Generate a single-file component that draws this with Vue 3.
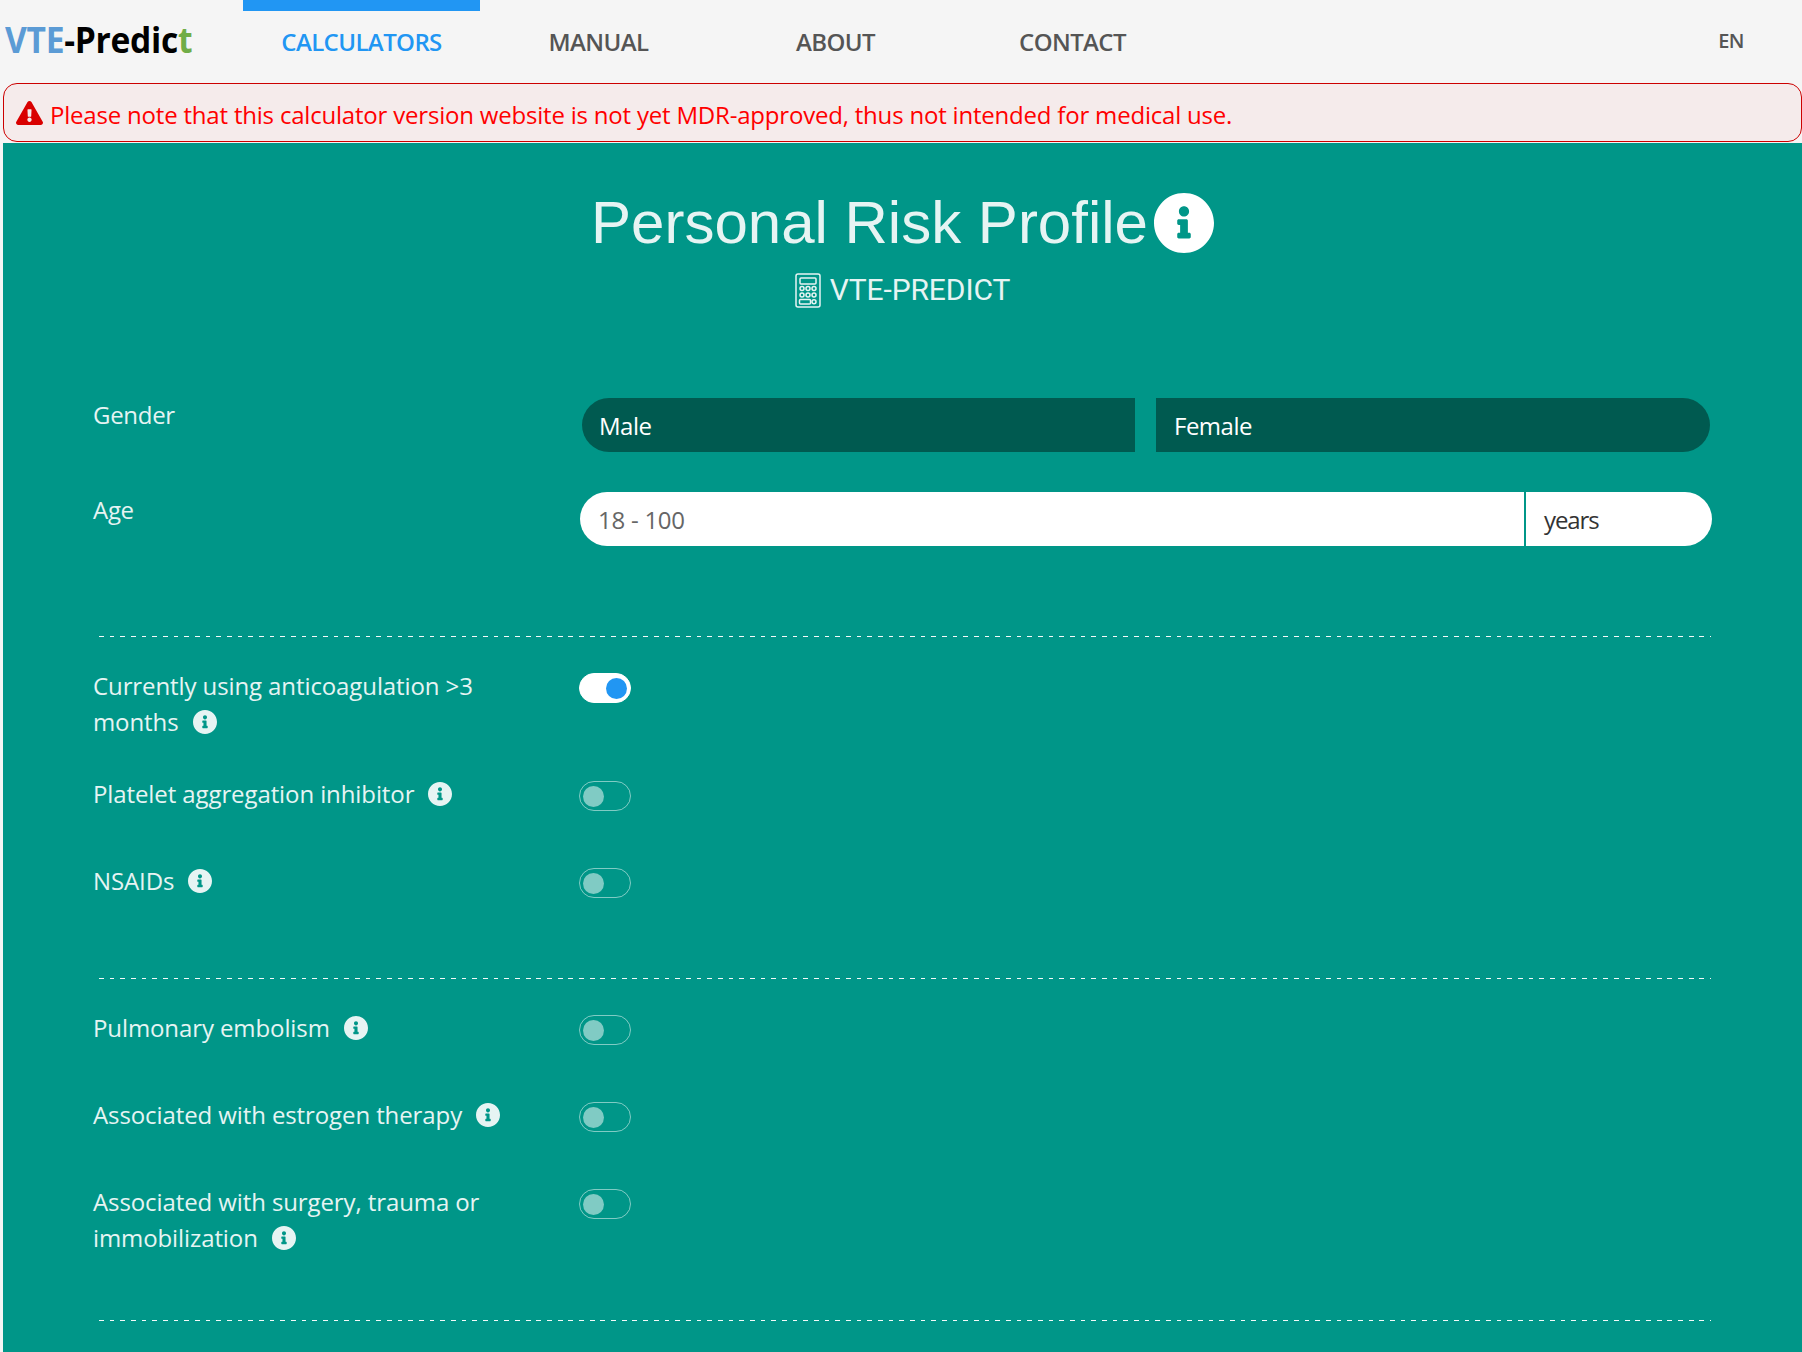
<script setup>
const nav = ['CALCULATORS', 'MANUAL', 'ABOUT', 'CONTACT']
const infoPath = 'M256 8C119.043 8 8 119.083 8 256c0 136.997 111.043 248 248 248s248-111.003 248-248C504 119.083 392.957 8 256 8zm0 110c23.196 0 42 18.804 42 42s-18.804 42-42 42-42-18.804-42-42 18.804-42 42-42zm56 254c0 6.627-5.373 12-12 12h-88c-6.627 0-12-5.373-12-12v-24c0-6.627 5.373-12 12-12h12v-64h-12c-6.627 0-12-5.373-12-12v-24c0-6.627 5.373-12 12-12h64c6.627 0 12 5.373 12 12v100h12c6.627 0 12 5.373 12 12v24z'
const sections = [
  [
    { label: 'Currently using anticoagulation >3 months', on: true },
    { label: 'Platelet aggregation inhibitor', on: false },
    { label: 'NSAIDs', on: false }
  ],
  [
    { label: 'Pulmonary embolism', on: false },
    { label: 'Associated with estrogen therapy', on: false },
    { label: 'Associated with surgery, trauma or immobilization', on: false }
  ]
]
</script>

<template>
  <div class="page">
    <header class="topbar">
      <div class="logo"><span class="logo-text"><span class="lb">VTE</span>-Predic<span class="lg">t</span></span></div>
      <nav class="nav">
        <a v-for="(item, i) in nav" :key="item" class="nav-item" :class="{ active: i === 0 }">{{ item }}</a>
      </nav>
      <div class="lang">EN</div>
    </header>

    <div class="alert">
      <svg class="warn" viewBox="0 0 576 512"><path fill="#d90000" d="M569.517 440.013C587.975 472.007 564.806 512 527.94 512H48.054c-36.937 0-59.999-40.055-41.577-71.987L246.423 23.985c18.467-32.009 64.72-31.951 83.154 0l239.94 416.028zM288 354c-25.405 0-46 20.595-46 46s20.595 46 46 46 46-20.595 46-46-20.595-46-46-46zm-43.673-165.346l7.418 136c.347 6.364 5.609 11.346 11.982 11.346h48.546c6.373 0 11.635-4.982 11.982-11.346l7.418-136c.375-6.874-5.098-12.654-11.982-12.654h-63.383c-6.884 0-12.356 5.78-11.981 12.654z"/></svg>
      <span class="alert-text">Please note that this calculator version website is not yet MDR-approved, thus not intended for medical use.</span>
    </div>

    <main class="panel">
      <div class="heading">
        <h1 class="title">Personal Risk Profile<svg class="title-info" viewBox="8 8 496 496"><path fill="#fff" :d="infoPath"/></svg></h1>
        <div class="subtitle">
          <svg class="calc" viewBox="0 0 26 35" fill="none" stroke="#e6f4f3" stroke-width="1.5">
            <rect x="1" y="1" width="24" height="33" rx="2"/>
            <rect x="5" y="5" width="16" height="6" rx="1"/>
            <circle cx="7" cy="15.5" r="2"/><circle cx="13" cy="15.5" r="2"/><circle cx="19" cy="15.5" r="2"/>
            <circle cx="7" cy="22" r="2"/><circle cx="13" cy="22" r="2"/><circle cx="19" cy="22" r="2"/>
            <rect x="4.5" y="26.5" width="11" height="4.5" rx="1"/><circle cx="19" cy="28.7" r="2"/>
          </svg>
          <span>VTE-PREDICT</span>
        </div>
      </div>

      <section class="basics">
        <div class="basic-row">
          <div class="basic-label">Gender</div>
          <div class="gender">
            <div class="seg seg-l">Male</div>
            <div class="seg seg-r">Female</div>
          </div>
        </div>
        <div class="basic-row">
          <div class="basic-label">Age</div>
          <div class="age">
            <div class="age-input">18 - 100</div>
            <div class="age-unit">years</div>
          </div>
        </div>
      </section>

      <template v-for="(rows, s) in sections" :key="s">
        <hr class="dash" />
        <section class="toggles">
          <div v-for="row in rows" :key="row.label" class="row">
            <div class="row-label">{{ row.label }}<svg class="info" viewBox="8 8 496 496"><path fill="#e6f4f3" :d="infoPath"/></svg></div>
            <div class="toggle" :class="{ on: row.on }"><span class="knob"></span></div>
          </div>
        </section>
      </template>
      <hr class="dash" />
    </main>
  </div>
</template>

<style>
html, body { margin: 0; background: #f5f5f5; overflow: hidden; }
</style>

<style scoped>
.page {
  width: 1802px;
  height: 1352px;
  overflow: hidden;
  background: #f5f5f5;
  font-family: "Open Sans", "Noto Sans", sans-serif;
}
.topbar {
  height: 83px;
  display: flex;
  position: relative;
}
.logo {
  width: 243px;
  padding: 20px 0 0 5px;
  box-sizing: border-box;
}
.logo-text {
  display: inline-block;
  font-size: 35px;
  line-height: 40px;
  font-weight: 700;
  color: #000;
  transform: scaleX(0.96);
  transform-origin: left center;
  letter-spacing: -0.3px;
  white-space: nowrap;
}
.lb { color: #5b9bd5; }
.lg { color: #70ad47; }
.nav { display: flex; }
.nav-item {
  width: 237px;
  text-align: center;
  font-size: 24px;
  font-weight: 600;
  line-height: 34px;
  padding-top: 25px;
  color: #555;
  letter-spacing: -0.6px;
  box-sizing: border-box;
}
.nav-item.active {
  color: #2196f3;
  position: relative;
}
.nav-item.active::before {
  content: "";
  position: absolute;
  left: 0;
  right: 0;
  top: 0;
  height: 11px;
  background: #2196f3;
}
.lang {
  margin-left: auto;
  padding: 27px 58px 0 0;
  font-size: 20px;
  font-weight: 600;
  line-height: 27px;
  color: #555;
  letter-spacing: -0.5px;
}
.alert {
  height: 59px;
  margin-left: 3px;
  box-sizing: border-box;
  border: 1px solid #cc0000;
  border-radius: 14px;
  background: #f5ebeb;
  display: flex;
  align-items: center;
  padding: 0 0 0 12px;
}
.warn { width: 27px; height: 24px; margin: 0; flex: none; }
.alert-text {
  margin: 5px 0 0 7px;
  font-size: 24px;
  line-height: 32px;
  color: #ff0000;
  letter-spacing: -0.2px;
  white-space: nowrap;
}
.panel {
  margin: 1px 0 0 3px;
  height: 1209px;
  background: #009688;
  color: #e6f4f3;
  box-sizing: border-box;
  padding: 1px 89px 0 90px;
}
.heading { text-align: center; margin-left: -1px; }
.title {
  margin: 49px 0 0;
  font-family: "Liberation Sans", Arial, sans-serif;
  font-size: 60px;
  font-weight: 400;
  line-height: 60px;
  display: flex;
  justify-content: center;
  align-items: center;
  gap: 6px;
}
.title-info { width: 60px; height: 60px; flex: none; }
.subtitle {
  margin-top: 19px;
  display: flex;
  justify-content: center;
  align-items: center;
  gap: 9px;
  font-family: Roboto, sans-serif;
  font-size: 30px;
  line-height: 36px;
  font-weight: 400;
  letter-spacing: -0.1px;
}
.calc { width: 26px; height: 35px; flex: none; }
.basics { margin-top: 90px; padding-bottom: 90px; }
.basic-row { display: flex; height: 54px; }
.basic-row + .basic-row { margin-top: 40px; }
.basic-label {
  width: 487px;
  flex: none;
  margin-top: -1px;
  font-size: 24px;
  line-height: 36px;
  letter-spacing: -0.3px;
  box-sizing: border-box;
}
.basic-row + .basic-row .basic-label { margin-top: 0; }
.gender {
  display: flex;
  gap: 21px;
  width: 1128px;
  margin-left: 2px;
  color: #fff;
  font-size: 24px;
}
.seg {
  flex: 1;
  background: #005a50;
  padding: 0 0 0 18px;
  line-height: 56px;
  letter-spacing: -0.5px;
}
.seg-l { padding-left: 17px; border-radius: 27px 0 0 27px; }
.seg-r { border-radius: 0 27px 27px 0; }
.age {
  display: flex;
  width: 1132px;
  font-size: 24px;
  line-height: 56px;
  letter-spacing: -0.25px;
}
.age-input {
  width: 944px;
  background: #fff;
  color: #666;
  border-radius: 27px 0 0 27px;
  padding-left: 18px;
  box-sizing: border-box;
}
.age-unit {
  flex: 1;
  margin-left: 2px;
  background: #fff;
  color: #333;
  border-radius: 0 27px 27px 0;
  padding-left: 18px;
  letter-spacing: -1.1px;
}
.dash {
  margin: 0 2px 0 6px;
  border: 0;
  height: 1px;
  background: repeating-linear-gradient(90deg, rgba(255, 255, 255, 0.95) 0, rgba(255, 255, 255, 0.95) 4.7px, transparent 4.7px, transparent 10.67px);
}
.toggles { padding: 32px 0 27px; }
.row { display: flex; min-height: 87px; }
.row-label {
  width: 486px;
  flex: none;
  box-sizing: border-box;
  padding-right: 50px;
  margin-top: -1px;
  margin-bottom: 37px;
  font-size: 24px;
  line-height: 36px;
  letter-spacing: -0.1px;
}
.info {
  width: 24px;
  height: 24px;
  margin-left: 14px;
  vertical-align: -3px;
}
.toggle {
  width: 52px;
  height: 30px;
  margin-top: 4px;
  box-sizing: border-box;
  border: 1px solid rgba(255, 255, 255, 0.5);
  border-radius: 15px;
  display: flex;
  align-items: center;
  padding: 0 3px;
}
.knob {
  width: 21px;
  height: 21px;
  border-radius: 50%;
  background: rgba(255, 255, 255, 0.5);
}
.toggle.on {
  background: #fff;
  border-color: #fff;
  justify-content: flex-end;
}
.toggle.on .knob { background: #2196f3; }
</style>
